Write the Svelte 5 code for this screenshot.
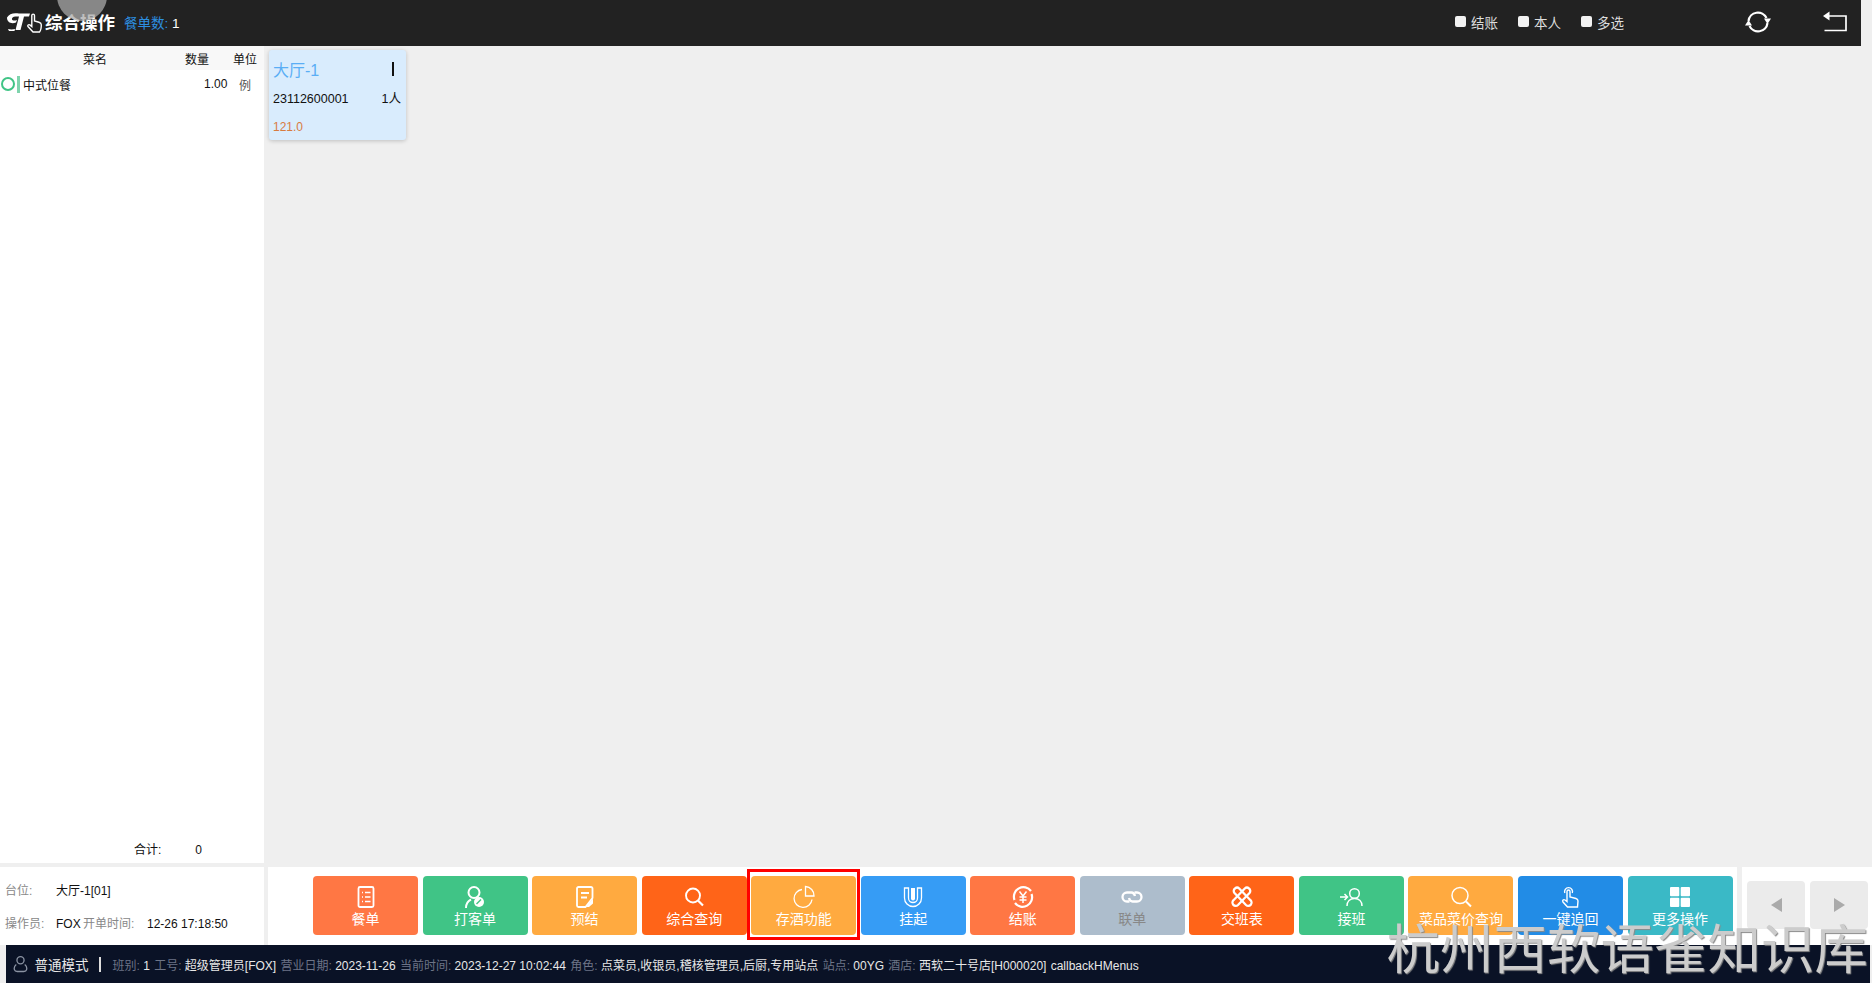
<script>
    const checks = ['结账', '本人', '多选'];

    const actions = [
        { label: '餐单', color: '#ff7744', icon: '<rect x="4.5" y="2" width="15" height="20" rx="1.5" stroke-width="1.8"/><path d="M8 7.5h1M11 7.5h5.5M8 12h1M11 12h5.5M8 16.5h1M11 16.5h5.5" stroke-width="1.7"/>' },
        { label: '打客单', color: '#40c486', icon: '<circle cx="11" cy="7.5" r="5.5" stroke-width="2"/><path d="M3 23c0-4 2-7 5-8.5" stroke-width="2"/><circle cx="16" cy="17" r="5" fill="#fff" stroke="none"/><path d="M13.5 19l4.5-4.5" stroke="#40c486" stroke-width="1.5"/>' },
        { label: '预结', color: '#ffaa40', icon: '<path d="M19.5 13V3.500a1.500 1.500 0 0 0-1.500-1.500H5.500A1.500 1.500 0 0 0 4 3.500v17A1.500 1.500 0 0 0 5.500 22h7z" stroke-width="1.8"/><path d="M8 8h8M8 12.500h6" stroke-width="1.8"/><path d="M13 22l7-8.500v5L16 22z" fill="#fff" stroke="none"/>' },
        { label: '综合查询', color: '#ff6418', icon: '<circle cx="11" cy="10.5" r="7" stroke-width="1.9"/><path d="M16 15.500l5 5" stroke-width="2.2"/>' },
        { label: '存酒功能', color: '#ffaa40', marked: true, icon: '<path d="M10 4.500A9 9 0 1 0 20 14.500" stroke-width="1.3"/><path d="M13.500 1.500a9 9 0 0 1 8.500 9.500h-8.500z" stroke-width="1.3"/>' },
        { label: '挂起', color: '#369cf5', icon: '<path d="M3.500 3h4v10a4.500 4.500 0 0 0 9 0V3h4v10a8.500 8.500 0 0 1-17 0z" stroke-width="1.3"/><path d="M10 3h4v10.500a2 2 0 0 1-4 0z" fill="#fff" stroke="none"/>' },
        { label: '结账', color: '#ff7744', icon: '<path d="M3.500 15A9.500 9.500 0 0 1 20 6M20.500 9A9.500 9.500 0 0 1 4 18" stroke-width="2.2"/><path d="M8.500 6.500L12 11l3.500-4.500M8.500 12h7M8.500 15h7M12 11v7" stroke-width="1.5"/>' },
        { label: '联单', color: '#adbdcc', textColor: '#888', icon: '<path d="M15 11c-.5-2-1.500-3.500-3.500-3.500H7a4.500 4.500 0 0 0 0 9h2.500" stroke-width="2.3"/><path d="M9 13c.5 2 1.500 3.500 3.500 3.500H17a4.500 4.500 0 0 0 0-9h-2.500" stroke-width="2.3"/>' },
        { label: '交班表', color: '#ff6418', icon: '<path d="M5 3.500a3 3 0 0 1 4.200 0l11.300 11.700a3.200 3.200 0 0 1-4.500 4.800L4.500 8a3.100 3.100 0 0 1 .5-4.500z" stroke-width="2.3"/><path d="M19 3.500a3 3 0 0 0-4.200 0L3.500 15.200A3.200 3.200 0 0 0 8 20L19.500 8a3.100 3.100 0 0 0-.5-4.500z" stroke-width="2.3"/>' },
        { label: '接班', color: '#40c486', icon: '<circle cx="15.5" cy="8.5" r="4.8" stroke-width="1.5"/><path d="M8 21c0-4.500 3-7.500 7.500-7.500S23 16.500 23 21" stroke-width="1.5"/><path d="M1 12h7M5.500 9l3 3-3 3" stroke-width="1.5"/>' },
        { label: '菜品菜价查询', color: '#ffaa40', icon: '<circle cx="11" cy="10.5" r="8" stroke-width="1.5"/><path d="M17 16.500l5 5" stroke-width="1.9"/>' },
        { label: '一键追回', color: '#228ce6', icon: '<path d="M8.500 22l-4.500-5c-1-1.500.5-3 2-2l2 1.500V6.500c0-2 3-2 3 0V12l6 1.500c1.500.4 2 1.300 2 2.500l-.5 6z" stroke-width="1.4"/><path d="M5.800 8a4 4 0 1 1 7.500 0" stroke-width="1.4"/>' },
        { label: '更多操作', color: '#3ab9c6', icon: '<rect x="2" y="2" width="9.3" height="9.3" rx="1" fill="#fff" stroke="none"/><rect x="12.7" y="2" width="9.3" height="9.3" rx="1" fill="#fff" stroke="none"/><rect x="2" y="12.7" width="9.3" height="9.3" rx="1" fill="#fff" stroke="none"/><rect x="12.7" y="12.7" width="9.3" height="9.3" rx="1" fill="#fff" stroke="none"/>' }
    ];

    const status = [
        ['班别:', '1'],
        ['工号:', '超级管理员[FOX]'],
        ['营业日期:', '2023-11-26'],
        ['当前时间:', '2023-12-27 10:02:44'],
        ['角色:', '点菜员,收银员,稽核管理员,后厨,专用站点'],
        ['站点:', '00YG'],
        ['酒店:', '西软二十号店[H000020]']
    ];
</script>

<div class="page">
    <header class="topbar">
        <svg class="logo" viewBox="0 0 36 22" fill="none" stroke="#fff">
            <path d="M1 6.500C3 2.500 8 1.500 13 2.500h11l-1 3h-5L14.500 19h-5L13 5.500H9.500C7 5.500 5.500 7 6 8.500c.5 1.300 3 1.300 5 .5l-1 2.500c-4 1.500-9 .5-9-5z" fill="#fff" stroke="none" />
            <path d="M2 18c2 .5 5 .5 7 0l-.5 2H3z" fill="#fff" stroke="none" />
            <path d="M27 21l-5-5.500c-.8-1.200.6-2.400 1.800-1.600l2 1.600V4.500c0-1.900 2.700-1.900 2.700 0V10l4.500 1.200c1.500.4 2.300 1.300 2.300 2.600 0 2.500-1 6.300-1.800 7.200z" stroke-width="1.400" />
        </svg>
        <h1>综合操作</h1>
        <span class="order-count"><em>餐单数:</em> 1</span>

        <div class="checks">
            {#each checks as name}
                <label><input type="checkbox" />{name}</label>
            {/each}
        </div>

        <svg class="refresh" viewBox="0 0 26 26" fill="none" stroke="#fff" stroke-width="2.2">
            <path d="M3.500 12A9.500 9.500 0 0 1 21.500 9" />
            <path d="M22.500 14A9.500 9.500 0 0 1 4.500 17" />
            <path d="M19 9.500h7L22.500 15z" fill="#fff" stroke="none" />
            <path d="M0 16.500h7L3.500 11z" fill="#fff" stroke="none" />
        </svg>
        <svg class="back" viewBox="0 0 24 21" fill="none" stroke="#fff" stroke-width="1.7">
            <path d="M6 5h17v14.500H1.500" />
            <path d="M0 5l6.500-4.500v9z" fill="#fff" stroke="none" />
        </svg>
    </header>

    <div class="middle">
        <aside class="list">
            <div class="list-head">
                <span class="col-name">菜名</span>
                <span>数量</span>
                <span>单位</span>
            </div>
            <div class="list-row">
                <span class="row-name"><i class="ring"></i><i class="tick"></i>中式位餐</span>
                <span class="row-qty">1.00</span>
                <span class="row-unit">例</span>
            </div>
            <div class="list-total">
                <span>合计:</span>
                <span class="total-num">0</span>
            </div>
        </aside>

        <main class="tables">
            <div class="card">
                <div class="card-title"><span>大厅-1</span><i></i></div>
                <div class="card-line"><span>23112600001</span><span>1人</span></div>
                <div class="card-price">121.0</div>
            </div>
        </main>
    </div>

    <div class="dock">
        <div class="info">
            <div class="info-line"><span class="dim wide">台位:</span><span>大厅-1[01]</span></div>
            <div class="info-line"><span class="dim wide">操作员:</span><span class="fox">FOX</span><span class="dim open">开单时间:</span><span>12-26 17:18:50</span></div>
        </div>
        <div class="actions">
            {#each actions as a}
                <button class:marked={a.marked} style="background:{a.color};color:{a.textColor || '#fff'}">
                    <svg viewBox="0 0 24 24" fill="none" stroke="#fff">{@html a.icon}</svg>
                    <span>{a.label}</span>
                </button>
            {/each}
        </div>
        <div class="pager">
            <button aria-label="上一页"><i class="left"></i></button>
            <button aria-label="下一页"><i class="right"></i></button>
        </div>
    </div>

    <footer class="status">
        <svg class="user" viewBox="0 0 16 18" fill="none" stroke="#8b93a3" stroke-width="1.4">
            <circle cx="8" cy="5" r="3.8" />
            <path d="M3.500 9.500C1.500 11 1 13 1.500 15c.3 1.200 1.500 2 3 2h7c1.500 0 2.700-.8 3-2 .5-2 0-4-2-5.500" />
        </svg>
        <b>普通模式</b>
        <i class="divider"></i>
        <div class="facts">
            {#each status as [key, value]}
                <span><span class="key">{key}</span> {value}</span>
            {/each}
            <span>callbackHMenus</span>
        </div>
    </footer>

    <div class="cursor-dot"></div>
    <div class="watermark">杭州西软语雀知识库</div>
</div>

<style>
    :global(body) {
        margin: 0;
        background: #efefef;
    }

    .page {
        position: relative;
        display: flex;
        flex-direction: column;
        height: 983px;
        overflow: hidden;
        background: #efefef;
        color: #111;
        font-family: 'Liberation Sans', 'Noto Sans CJK SC', sans-serif;
        font-size: 12px;
    }

    .topbar {
        display: flex;
        align-items: center;
        flex: none;
        width: 1861px;
        height: 46px;
        padding: 0 0 3px 6px;
        box-sizing: border-box;
        background: #222;
        color: #fff;
    }

    .logo {
        width: 36px;
        height: 22px;
    }

    h1 {
        margin: 0 0 0 3px;
        font-size: 17.5px;
        font-weight: 700;
    }

    .order-count {
        margin-left: 9px;
        font-size: 13.5px;
    }

    .order-count em {
        color: #2d8fe0;
        font-style: normal;
    }

    .checks {
        display: flex;
        gap: 20px;
        margin-left: auto;
        margin-right: 121px;
    }

    .checks label {
        display: flex;
        align-items: center;
        color: #ddd;
        font-size: 13.5px;
    }

    .checks input {
        appearance: none;
        width: 11px;
        height: 11px;
        margin: 0 5px 0 0;
        border-radius: 2px;
        background: #f2f2f2;
    }

    .refresh {
        width: 26px;
        height: 26px;
        margin-right: 52px;
    }

    .back {
        width: 24px;
        height: 21px;
        margin-right: 14px;
    }

    .middle {
        display: flex;
        flex: 1;
        min-height: 0;
    }

    .list {
        display: flex;
        flex-direction: column;
        width: 264px;
        background: #fff;
    }

    .list-head {
        display: grid;
        grid-template-columns: 185px 48px 1fr;
        align-items: center;
        height: 24px;
        background: #f8f8f8;
    }

    .col-name {
        padding-left: 5px;
        text-align: center;
    }

    .list-row {
        display: grid;
        grid-template-columns: 185px 48px 1fr;
        align-items: center;
        height: 28px;
    }

    .row-name {
        display: flex;
        align-items: center;
    }

    .ring {
        width: 10px;
        height: 10px;
        margin-left: 1px;
        border: 2px solid #40c486;
        border-radius: 50%;
    }

    .tick {
        width: 3px;
        height: 17px;
        margin: 0 3px 0 2px;
        background: #7fd4ad;
    }

    .row-qty {
        padding-left: 19px;
    }

    .row-unit {
        padding-left: 6px;
        color: #555;
    }

    .list-total {
        display: flex;
        align-items: baseline;
        margin-top: auto;
        height: 23px;
        padding-left: 134px;
    }

    .total-num {
        margin-left: 34px;
    }

    .tables {
        flex: 1;
        padding: 4px 5px;
    }

    .card {
        display: flex;
        flex-direction: column;
        width: 137px;
        height: 90px;
        padding: 0 5px 0 4px;
        box-sizing: border-box;
        border-radius: 3px;
        background: #d9ecfd;
        box-shadow: 0 1px 4px rgba(0, 0, 0, 0.2);
    }

    .card-title {
        display: flex;
        align-items: center;
        justify-content: space-between;
        height: 38px;
        padding-right: 7px;
        color: #5aaef5;
        font-size: 16px;
    }

    .card-title i {
        width: 2px;
        height: 14px;
        background: #111;
    }

    .card-line {
        display: flex;
        justify-content: space-between;
        height: 22px;
        line-height: 22px;
        font-size: 12.5px;
    }

    .card-price {
        margin-top: 10px;
        color: #d87b3f;
    }

    .dock {
        display: flex;
        flex: none;
        gap: 4px;
        height: 78px;
        margin-top: 4px;
    }

    .info {
        display: flex;
        flex-direction: column;
        gap: 16px;
        width: 259px;
        padding: 14px 0 0 5px;
        background: #fff;
        font-size: 12px;
    }

    .info-line {
        display: flex;
        align-items: baseline;
    }

    .dim {
        color: #888;
    }

    .wide {
        width: 51px;
    }

    .fox {
        width: 27px;
    }

    .open {
        width: 64px;
    }

    .actions {
        display: flex;
        gap: 4.55px;
        width: 1469px;
        padding: 9px 0 0 45px;
        box-sizing: border-box;
        background: #fff;
    }

    .actions button {
        position: relative;
        display: flex;
        flex-direction: column;
        align-items: center;
        width: 105px;
        height: 59px;
        padding: 9px 0 0;
        border: 0;
        border-radius: 4px;
        font: inherit;
        font-size: 14px;
    }

    .actions svg {
        flex: none;
        width: 24px;
        height: 24px;
    }

    .actions span {
        line-height: 20px;
    }

    .marked::after {
        content: '';
        position: absolute;
        inset: -7px -4px -5px;
        border: 3px solid #f00;
    }

    .pager {
        display: flex;
        flex: 1;
        gap: 5px;
        margin-left: 1px;
        padding: 14px 0 0 5px;
        background: #fff;
    }

    .pager button {
        display: flex;
        align-items: center;
        justify-content: center;
        width: 58px;
        height: 48px;
        padding: 0;
        border: 0;
        border-radius: 4px;
        background: #ebebeb;
    }

    .pager i {
        border-top: 7px solid transparent;
        border-bottom: 7px solid transparent;
    }

    .left {
        border-right: 11px solid #aaa;
    }

    .right {
        border-left: 11px solid #aaa;
    }

    .status {
        display: flex;
        flex: none;
        align-items: center;
        gap: 4.5px;
        height: 38px;
        margin: 0 2px 0 6px;
        padding-left: 7px;
        background: #0a1226;
        color: #e8e8e8;
    }

    .user {
        width: 15px;
        height: 18px;
    }

    .status b {
        margin-left: 2px;
        font-size: 13.5px;
        font-weight: 400;
    }

    .divider {
        width: 2px;
        height: 15px;
        margin: 0 7px 0 6px;
        background: #ddd;
    }

    .facts {
        display: flex;
        align-items: baseline;
        gap: 4.3px;
    }

    .key {
        color: #6d7486;
    }

    .cursor-dot {
        position: absolute;
        left: 57px;
        top: -29px;
        width: 50px;
        height: 50px;
        border-radius: 50%;
        background: rgba(170, 170, 170, 0.75);
    }

    .watermark {
        position: absolute;
        right: 4px;
        top: 908px;
        color: #ccc;
        font-family: 'Noto Sans CJK SC', sans-serif;
        font-size: 53.5px;
        line-height: 76px;
        white-space: nowrap;
        text-shadow: 1px 1px 1px #8a8a8a;
    }
</style>
